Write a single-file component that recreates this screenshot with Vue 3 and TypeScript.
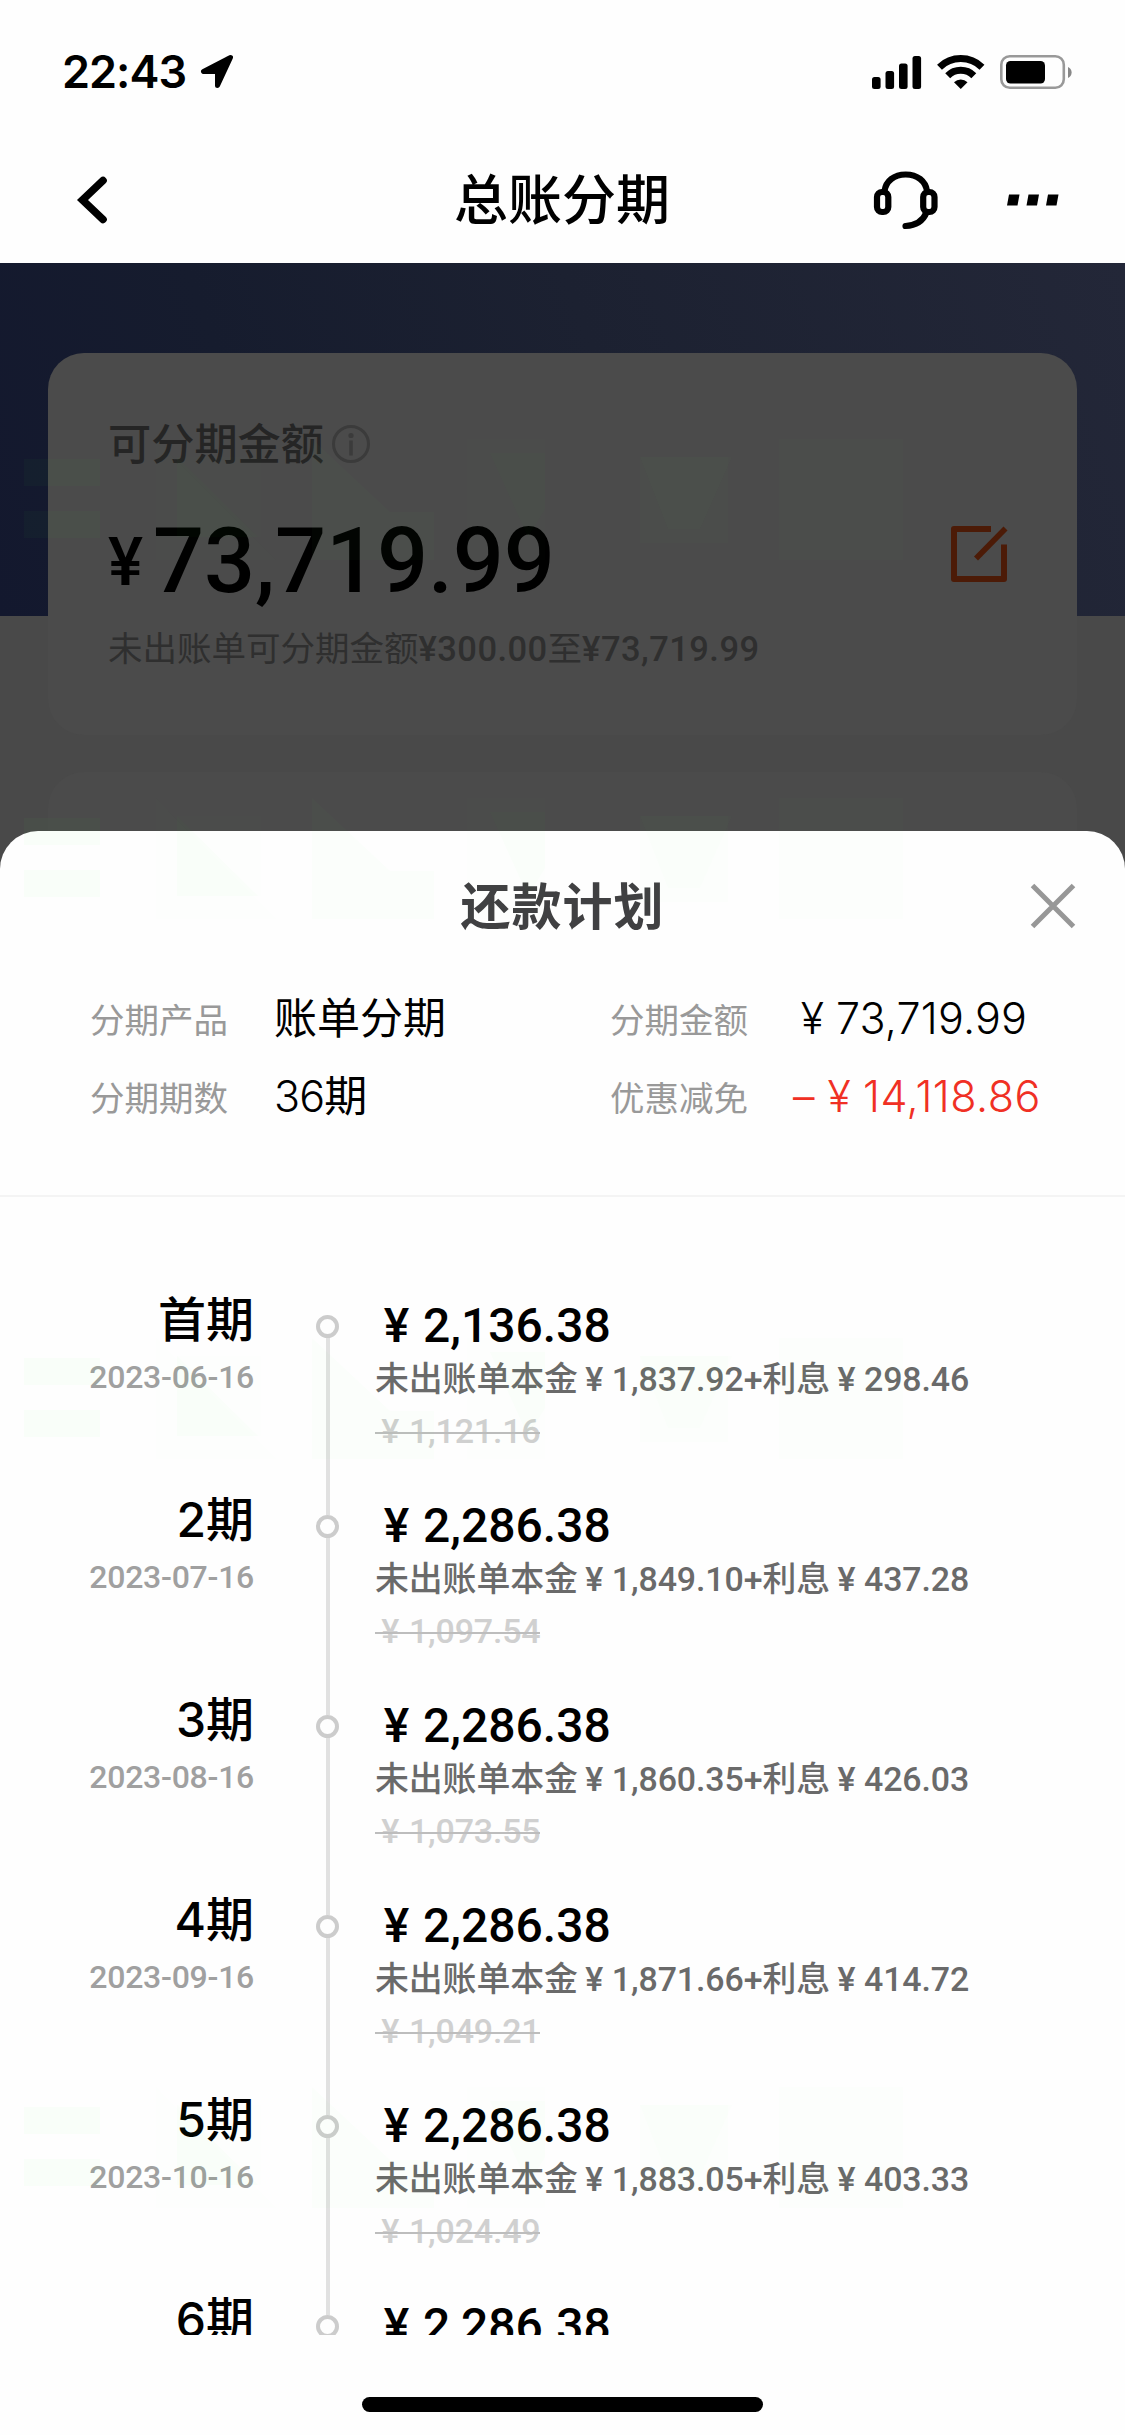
<script setup lang="ts">
interface Installment {
  period: string
  date: string
  total: string
  principal: string
  interest: string
  original: string
}

const installments: Installment[] = [
  { period: '首期', date: '2023-06-16', total: '2,136.38', principal: '1,837.92', interest: '298.46', original: '1,121.16' },
  { period: '2期', date: '2023-07-16', total: '2,286.38', principal: '1,849.10', interest: '437.28', original: '1,097.54' },
  { period: '3期', date: '2023-08-16', total: '2,286.38', principal: '1,860.35', interest: '426.03', original: '1,073.55' },
  { period: '4期', date: '2023-09-16', total: '2,286.38', principal: '1,871.66', interest: '414.72', original: '1,049.21' },
  { period: '5期', date: '2023-10-16', total: '2,286.38', principal: '1,883.05', interest: '403.33', original: '1,024.49' },
]

// First row below the fold: only its heading line peeks into the list
const upcoming = { period: '6期', total: '2,286.38' }

// Top edge of every watermark strip
const watermarks: number[] = [439, 798, 1338, 2087]
</script>

<template>
  <div class="screen">
    <header class="top">
      <div class="status">
        <div class="clock">
          <span class="time">22:43</span>
          <svg class="location" width="36" height="36" viewBox="0 0 36 36">
            <path d="M31.500 3.500 4.500 17.500H18.500V31.500Z" fill="#000" stroke="#000" stroke-width="5" stroke-linejoin="round" />
          </svg>
        </div>
        <svg class="indicators" width="202" height="36" viewBox="0 0 202 36">
          <rect x="0" y="23" width="8.600" height="12" rx="2.500" />
          <rect x="13.500" y="17" width="8.600" height="18" rx="2.500" />
          <rect x="27" y="9.500" width="8.600" height="25.500" rx="2.500" />
          <rect x="40.500" y="2" width="8.600" height="33" rx="2.500" />
          <g fill="none" stroke="#000" stroke-width="7">
            <path d="M67.500 13.200A30.500 30.500 0 0 1 110 13.200" />
            <path d="M75.700 21.700A18.500 18.500 0 0 1 101.800 21.700" />
          </g>
          <path d="M82 28.300A9.800 9.800 0 0 1 95.500 28.300L88.750 35Z" />
          <rect x="129.300" y="2.200" width="62.500" height="31.600" rx="8.500" fill="none" stroke="#999" stroke-width="2.600" />
          <rect x="134" y="7" width="39" height="22.600" rx="4.500" />
          <path d="M196 13v11a6 6 0 0 0 0-11Z" fill="#888" />
        </svg>
      </div>
      <nav class="nav">
        <svg class="back" width="36" height="54" viewBox="0 0 36 54">
          <path d="M29 7.500 8.500 27 29 46.500" fill="none" stroke="#000" stroke-width="7.600" stroke-linecap="round" />
        </svg>
        <h1 class="nav-title">总账分期</h1>
        <div class="nav-actions">
          <svg width="68" height="62" viewBox="0 0 68 62" fill="none" stroke="#000" stroke-width="6.200">
            <rect x="5" y="23" width="11.300" height="20" rx="5" />
            <rect x="51.200" y="23" width="11.300" height="20" rx="5" />
            <path d="M12.500 22C14 12 22 5.500 33.700 5.500S53.500 12 55 22" />
            <path d="M54.500 43.500C51 52 43 56.500 33.500 57" stroke-linecap="round" />
          </svg>
          <svg width="54" height="14" viewBox="0 0 54 14">
            <path d="M3 1.500h10.500l-2 11H1ZM22.500 1.500H33l-2 11H20.500ZM42 1.500h10.500l-2 11H40Z" />
          </svg>
        </div>
      </nav>
    </header>

    <section class="dimmed">
      <div class="card quota">
        <div class="quota-label">
          可分期金额
          <svg width="40" height="40" viewBox="0 0 40 40">
            <circle cx="20" cy="20" r="17.500" fill="none" stroke="#3b3b3b" stroke-width="3" />
            <circle cx="20" cy="11.500" r="2.600" fill="#3b3b3b" />
            <path d="M20 16.500v15" stroke="#3b3b3b" stroke-width="3.600" />
          </svg>
        </div>
        <div class="quota-row">
          <div class="quota-amount"><span class="quota-sign">¥</span>73,719.99</div>
          <svg class="edit" width="60" height="60" viewBox="0 0 60 60" fill="none" stroke="#4c1b07" stroke-width="6">
            <path d="M42 5H5v50h50V20.500" stroke-linejoin="round" />
            <path d="M27 34.500 56.500 4.500" stroke-width="5.600" />
          </svg>
        </div>
        <div class="quota-range">未出账单可分期金额<span class="figure">¥300.00</span>至<span class="figure">¥73,719.99</span></div>
      </div>
      <div class="card next"></div>
    </section>

    <section class="sheet">
      <div class="sheet-head">
        <h2 class="sheet-title">还款计划</h2>
        <svg class="close" width="46" height="46" viewBox="0 0 46 46">
          <path d="M2.500 2.500 43.500 43.500M43.500 2.500 2.500 43.500" stroke="#979797" stroke-width="5" />
        </svg>
      </div>

      <div class="summary">
        <span class="key">分期产品</span>
        <span class="value">账单分期</span>
        <span class="key">分期金额</span>
        <span class="value money"><span class="yen">¥</span>73,719.99</span>
        <span class="key">分期期数</span>
        <span class="value"><span class="count">36</span>期</span>
        <span class="key">优惠减免</span>
        <span class="value money discount"><span class="minus">–</span><span class="yen">¥</span>14,118.86</span>
      </div>

      <ol class="plan">
        <li v-for="item in installments" :key="item.period" class="item">
          <div class="when">
            <div class="period">{{ item.period }}</div>
            <div class="date">{{ item.date }}</div>
          </div>
          <div class="track">
            <i class="dot"></i>
            <i class="line"></i>
          </div>
          <div class="detail">
            <div class="total"><span class="yen">¥</span>{{ item.total }}</div>
            <div class="split">未出账单本金<span class="yen">¥</span>{{ item.principal }}+利息<span class="yen">¥</span>{{ item.interest }}</div>
            <div class="original"><span class="struck"><span class="yen">¥</span>{{ item.original }}</span></div>
          </div>
        </li>
        <li class="item">
          <div class="when">
            <div class="period">{{ upcoming.period }}</div>
          </div>
          <div class="track">
            <i class="dot"></i>
          </div>
          <div class="detail">
            <div class="total"><span class="yen">¥</span>{{ upcoming.total }}</div>
          </div>
        </li>
      </ol>

      <footer class="home"><i class="home-bar"></i></footer>
    </section>

    <svg
      v-for="y in watermarks"
      :key="y"
      class="watermark"
      :style="{ top: y + 'px' }"
      width="1125"
      height="122"
      viewBox="0 0 1125 122"
      fill="#50ff50"
    >
      <path d="M24 20h76v27H24ZM24 72h76v27H24Z" fill-opacity=".026" />
      <path d="M156 0 276 121H156Z" fill-opacity=".008" />
      <path d="M177 18h84v80h-84Z" fill-opacity=".008" />
      <path d="M177 18 258 98H177Z" fill-opacity=".014" />
      <path d="M312 0 390 73H434V121H312Z" fill-opacity=".02" />
      <path d="M467 0h78v121h-78Z" fill-opacity=".008" />
      <path d="M490 14h55V70L528 98Z" fill-opacity=".014" />
      <path d="M640 18h88v86h-88Z" fill-opacity=".01" />
      <path d="M640 18h92L700 90H668Z" fill-opacity=".012" />
      <path d="M779 0h124v121H779Z" fill-opacity=".012" />
    </svg>
  </div>
</template>

<style>
body {
  margin: 0;
  background: #fff;
}
</style>

<style scoped>
.screen {
  position: relative;
  width: 1125px;
  height: 2435px;
  overflow: hidden;
  display: flex;
  flex-direction: column;
  background: #fefefe;
  font-family: Inter, "Noto Sans CJK SC", sans-serif;
  color: #000;
}

.screen svg {
  display: block;
  flex: none;
}

.top {
  flex: none;
  height: 263px;
  background: #fefefe;
}

.status {
  height: 143px;
  box-sizing: border-box;
  padding: 0 51px 0 62px;
  display: flex;
  align-items: center;
  justify-content: space-between;
}

.clock {
  display: flex;
  align-items: center;
}

.time {
  width: 137px;
  font-size: 45px;
  font-weight: 600;
  line-height: 50px;
  letter-spacing: -1px;
}

.nav {
  height: 113px;
  display: grid;
  grid-template-columns: 1fr auto 1fr;
  align-items: center;
}

.back {
  margin-left: 74px;
}

.nav-title {
  margin: 0;
  padding: 3px 1px 0 0;
  font-size: 54px;
  font-weight: 500;
  line-height: 70px;
}

.nav-actions {
  display: flex;
  align-items: center;
  justify-content: flex-end;
  gap: 66px;
  padding-right: 65px;
}

.dimmed {
  flex: none;
  height: 608px;
  box-sizing: border-box;
  padding: 90px 48px 0;
  display: flex;
  flex-direction: column;
  gap: 37px;
  background:
    linear-gradient(70deg, #13182e 0%, #161c2e 25%, #1c2131 55%, #232738 100%) top / 100% 353px no-repeat,
    #494949;
}

.card {
  border-radius: 36px;
  background: #4b4b4b;
}

.quota {
  height: 382px;
  box-sizing: border-box;
  padding: 66px 68px 0 60px;
}

.next {
  height: 99px;
  border-radius: 36px 36px 0 0;
}

.quota-label {
  display: flex;
  align-items: center;
  gap: 7px;
  height: 50px;
  font-size: 43.200px;
  font-weight: 500;
  line-height: 50px;
  color: #252525;
}

.quota-row {
  display: flex;
  align-items: center;
  justify-content: space-between;
  height: 100px;
  margin-top: 43px;
}

.quota-amount {
  font-family: Roboto, sans-serif;
  font-size: 90px;
  font-weight: 500;
  line-height: 100px;
  letter-spacing: -0.150px;
}

.quota-sign {
  display: inline-block;
  width: 45px;
  font-size: 66px;
  line-height: 60px;
  position: relative;
  top: -7px;
}

.edit {
  margin-top: -16px;
}

.quota-range {
  margin-top: 14px;
  font-family: Roboto, "Noto Sans CJK SC", sans-serif;
  font-size: 34.500px;
  line-height: 46px;
  color: #2f2f2f;
}

.figure {
  font-weight: 500;
  letter-spacing: 0.450px;
}

.sheet {
  position: relative;
  flex: none;
  height: 1604px;
  margin-top: -40px;
  border-radius: 38px 38px 0 0;
  background: #fefefe;
  display: flex;
  flex-direction: column;
}

.sheet-head {
  flex: none;
  height: 149px;
  display: grid;
  grid-template-columns: 1fr auto 1fr;
  align-items: center;
}

.sheet-title {
  grid-column: 2;
  margin: 0;
  padding-top: 2px;
  font-size: 50px;
  font-weight: 700;
  line-height: 60px;
  letter-spacing: 1px;
  color: #404042;
}

.close {
  justify-self: end;
  margin-right: 49px;
}

.summary {
  flex: none;
  height: 217px;
  box-sizing: border-box;
  padding-left: 90px;
  display: grid;
  grid-template-columns: 184px 336px 183px 1fr;
  grid-auto-rows: 78px;
  align-items: center;
  border-bottom: 2px solid #f4f4f4;
}

.key {
  padding-top: 3px;
  font-size: 34.500px;
  line-height: 46px;
  color: #999;
}

.value {
  padding-bottom: 3px;
  font-size: 43px;
  line-height: 56px;
  white-space: nowrap;
}

.count {
  font-weight: 300;
  letter-spacing: -0.800px;
}

.money {
  font-weight: 300;
  letter-spacing: 0.200px;
}

.discount {
  letter-spacing: 0.500px;
  color: #f03024;
}

.minus {
  display: inline-block;
  width: 27px;
}

.yen {
  display: inline-block;
  width: 1em;
  text-align: center;
  text-indent: -0.1em;
}

.plan {
  flex: none;
  height: 1138px;
  box-sizing: border-box;
  margin: 0;
  padding: 99px 0 0 54px;
  overflow: hidden;
  list-style: none;
}

.item {
  display: flex;
  height: 200px;
}

.when {
  width: 200px;
  margin-top: -1px;
  text-align: right;
}

.period {
  font-size: 48px;
  font-weight: 500;
  line-height: 50px;
}

.date {
  margin-top: 10px;
  font-family: Roboto, sans-serif;
  font-size: 32px;
  font-weight: 500;
  line-height: 44px;
  letter-spacing: -0.250px;
  color: #a0a0a0;
}

.track {
  width: 23px;
  height: 200px;
  margin-left: 62px;
  padding-top: 19px;
  display: flex;
  flex-direction: column;
  align-items: center;
}

.dot {
  flex: none;
  width: 15px;
  height: 15px;
  border: 4px solid #ccc;
  border-radius: 50%;
}

.line {
  flex: none;
  width: 4px;
  height: 177px;
  background: #e1e1e1;
}

.detail {
  margin-left: 36px;
  font-family: Roboto, "Noto Sans CJK SC", sans-serif;
  font-weight: 500;
  white-space: nowrap;
}

.total {
  font-size: 48px;
  line-height: 60px;
}

.split {
  font-size: 33.900px;
  line-height: 47px;
  letter-spacing: -0.080px;
  color: #6a6a6a;
}

.split .yen {
  text-indent: -0.03em;
}

.original {
  font-size: 34px;
  line-height: 56px;
  letter-spacing: -0.200px;
  color: #d0d0d0;
}

.struck {
  position: relative;
}

.struck::after {
  content: "";
  position: absolute;
  left: 0;
  right: 0;
  top: 21px;
  height: 2px;
  background: #bdbdbd;
}

.home {
  flex: none;
  height: 99px;
  display: flex;
  justify-content: center;
  align-items: center;
}

.home-bar {
  width: 401px;
  height: 15px;
  margin-top: 39px;
  border-radius: 8px;
  background: #000;
}

.watermark {
  position: absolute;
  left: 0;
  pointer-events: none;
}
</style>
